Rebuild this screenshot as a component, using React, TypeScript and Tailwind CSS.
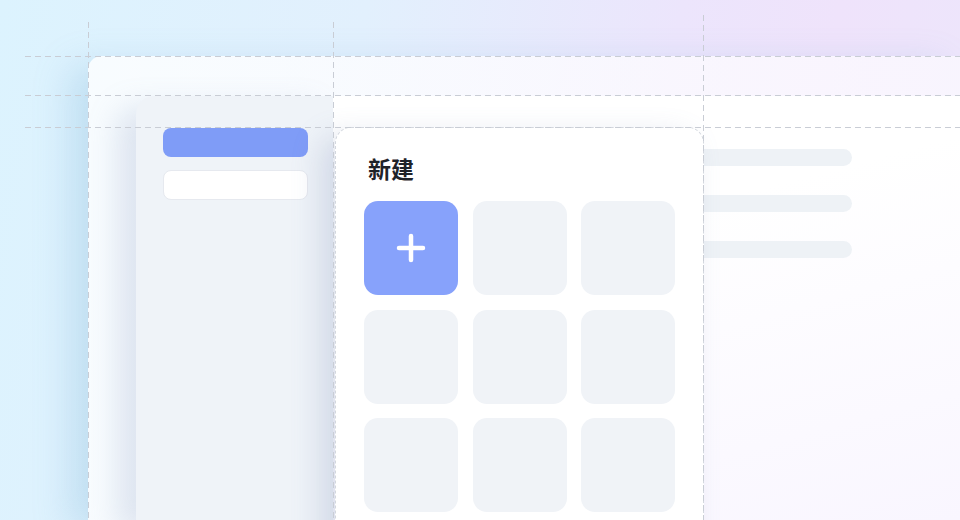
import React from 'react'

const tiles = [0, 1, 2, 3, 4, 5, 6, 7, 8]

function Guides() {
  // dashed layout guides drawn over the mockup
  const h = [56.5, 95.5, 127.5]
  const v = [
    { x: 88.5, y: 22 },
    { x: 333.5, y: 22 },
    { x: 703.5, y: 15 },
  ]
  return (
    <svg className="pointer-events-none absolute inset-0" width="960" height="520">
      {h.map((y) => (
        <line key={y} x1="25" y1={y} x2="960" y2={y} stroke="#c9cdd5" strokeWidth="1" strokeDasharray="6 4" />
      ))}
      {v.map((l) => (
        <line key={l.x} x1={l.x} y1={l.y} x2={l.x} y2="520" stroke="#c9cdd5" strokeWidth="1" strokeDasharray="6 4" />
      ))}
    </svg>
  )
}

export default function App() {
  return (
    <div
      className="relative h-[520px] w-[960px] overflow-hidden bg-[linear-gradient(100deg,#dcf3fe_0%,#e2f0fd_35%,#ece5fc_65%,#efe3fb_80%,#ece6fb_100%)]"
      style={{ fontFamily: '"Noto Sans CJK SC", "Noto Sans", sans-serif' }}
    >
      <div className="ml-[88px] mt-[56px] flex h-[464px] rounded-tl-[14px] bg-[linear-gradient(90deg,rgba(255,255,255,0.8),rgba(252,250,255,0.75))] pl-[48px] pt-[40px] shadow-[-18px_10px_36px_rgba(110,170,210,0.26)]">
        <div className="flex w-[197px] flex-col rounded-tl-[18px] bg-[#eff3f8] pl-[27px] pr-[25px] pt-[32px] shadow-[-18px_12px_30px_rgba(140,160,195,0.25)]">
          <div className="h-[29px] rounded-[8px] bg-[#7f9cf7]" />
          <div className="mt-[13px] h-[30px] rounded-[8px] border border-[#e6e9ef] bg-white" />
        </div>

        <div className="relative flex-1 bg-[linear-gradient(165deg,#ffffff_35%,#f9f6ff_100%)]">
          <div className="ml-[260px] flex flex-col gap-[29px] pt-[53px]">
            <div className="h-[17px] w-[259px] rounded-full bg-[#eef2f6]" />
            <div className="h-[17px] w-[259px] rounded-full bg-[#eef2f6]" />
            <div className="h-[17px] w-[259px] rounded-full bg-[#eef2f6]" />
          </div>

          <div className="absolute left-[2px] top-[31px] h-[420px] w-[369px] rounded-t-[16px] border border-dashed border-[#d3d7de] bg-white pl-[28px] pt-[24px] shadow-[-14px_10px_30px_rgba(115,135,180,0.24)]">
            <div className="ml-[4px] text-[23px] font-semibold leading-[32px] text-[#1f2329]">新建</div>
            <div className="mt-[17px] grid grid-cols-[94px_94px_94px] gap-x-[14.5px] gap-y-[14.5px]">
              {tiles.map((i) =>
                i === 0 ? (
                  <div key={i} className="flex h-[94px] w-[94px] items-center justify-center rounded-[14px] bg-[#87a2fb]">
                    <svg width="30" height="30" viewBox="0 0 30 30">
                      <path d="M15 3v24M3 15h24" stroke="#ffffff" strokeWidth="4.5" strokeLinecap="round" />
                    </svg>
                  </div>
                ) : (
                  <div key={i} className="h-[94px] w-[94px] rounded-[14px] bg-[#f0f3f7]" />
                ),
              )}
            </div>
          </div>
        </div>
      </div>

      <Guides />
    </div>
  )
}
